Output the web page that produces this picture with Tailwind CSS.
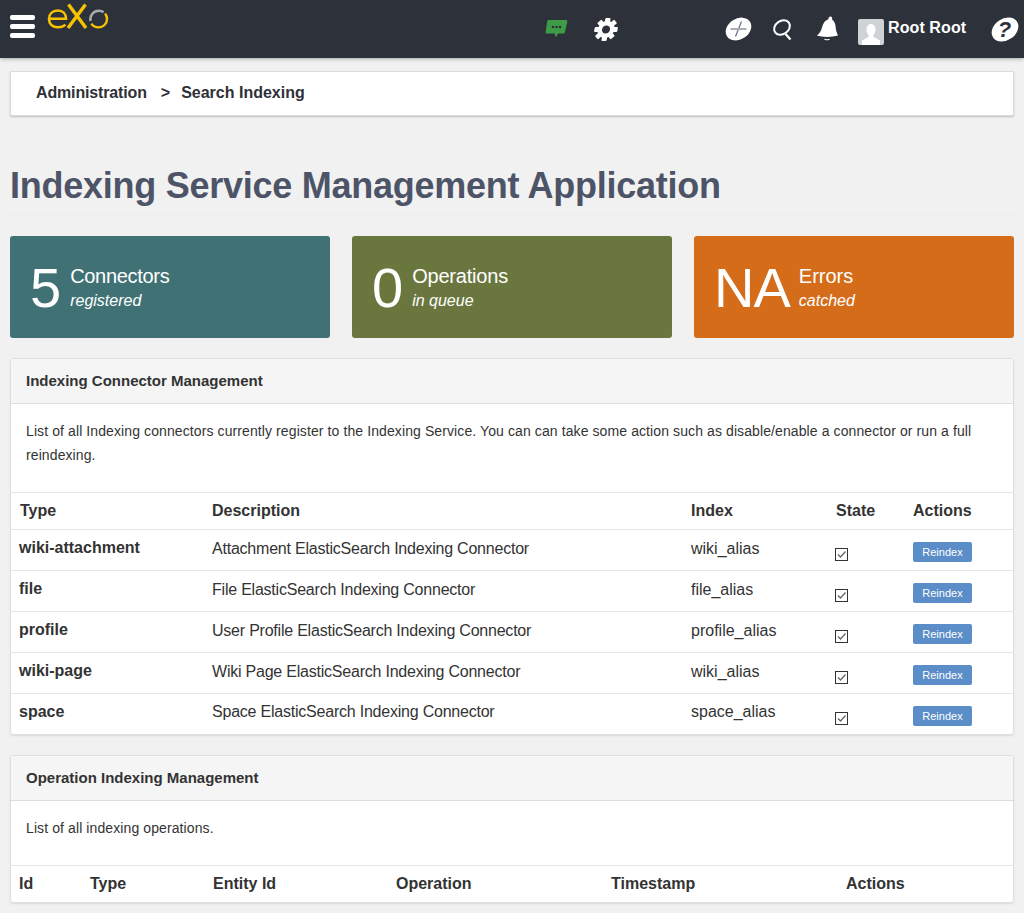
<!DOCTYPE html>
<html lang="en">
<head>
    <meta charset="UTF-8">
    <title>Search Indexing</title>
    <script src="https://cdn.jsdelivr.net/npm/@tailwindcss/browser@4"></script>
</head>
<body class="bg-[#f1f1f1] font-['Liberation_Sans',Arial,sans-serif] text-[#333] h-[913px] overflow-hidden">
    <!-- Top bar -->
    <header class="relative h-[58px] bg-[#2d323a] shadow-[0_1px_4px_rgba(0,0,0,0.3)]">
        <div class="absolute left-[10px] top-[15px] w-[25px] flex flex-col gap-[4px]">
            <span class="h-[5px] rounded-[2px] bg-white"></span>
            <span class="h-[5px] rounded-[2px] bg-white"></span>
            <span class="h-[5px] rounded-[2px] bg-white"></span>
        </div>
        <svg class="absolute left-[46px] top-[3px]" width="64" height="28" viewBox="0 0 64 28" fill="none">
            <path d="M3.5 15.8H20C20 10.5 16.5 7.5 12 7.5C6.5 7.5 3 11 3 16C3 21 6.5 24.3 12 24.3C15 24.3 17.5 23.5 19.5 21.8" stroke="#f7c300" stroke-width="2.6"/>
            <path d="M22.5 1.5L40 25M39.5 1.5L22 25" stroke="#f7c300" stroke-width="3.4"/>
            <path d="M59 10.5C60.4 12 61 14 61 16C61 20.8 57.2 24.4 52.6 24.4C49.5 24.4 47 23 45.4 20.6" stroke="#f7c300" stroke-width="2.4"/>
            <path d="M44.4 18C43.6 12.4 47.6 7.8 52.8 7.8C54.6 7.8 56.4 8.3 57.6 9.2" stroke="#a9acaf" stroke-width="2.4"/>
        </svg>
        <!-- chat -->
        <svg class="absolute left-[545px] top-[19px]" width="23" height="20" viewBox="0 0 23 20">
            <path d="M4 1H21C22 1 22.6 1.8 22.3 2.8L20 13C19.8 14 19 14.6 18 14.6H13L11 18.6L9.6 14.6H2C1 14.6 .4 13.8 .7 12.8L2.2 2.6C2.4 1.6 3 1 4 1Z" fill="#3f9c46"/>
            <circle cx="8" cy="8" r="1.3" fill="#2d323a"/><circle cx="11.5" cy="8" r="1.3" fill="#2d323a"/><circle cx="15" cy="8" r="1.3" fill="#2d323a"/>
        </svg>
        <!-- gear -->
        <svg class="absolute left-[593px] top-[17px]" width="26" height="25" viewBox="0 0 26 25">
            <g transform="translate(13 12.5) skewX(-10)">
                <g fill="#fff">
                    <circle r="8.4"/>
                    <rect x="-2.6" y="-11.6" width="5.2" height="23.2" rx="1"/>
                    <rect x="-2.6" y="-11.6" width="5.2" height="23.2" rx="1" transform="rotate(45)"/>
                    <rect x="-2.6" y="-11.6" width="5.2" height="23.2" rx="1" transform="rotate(90)"/>
                    <rect x="-2.6" y="-11.6" width="5.2" height="23.2" rx="1" transform="rotate(135)"/>
                </g>
                <circle r="4" fill="#2d323a"/>
            </g>
        </svg>
        <!-- add -->
        <svg class="absolute left-[725px] top-[16px]" width="27" height="26" viewBox="0 0 27 26">
            <ellipse cx="13.5" cy="13" rx="13.6" ry="10.4" fill="#fff" transform="rotate(-32 13.5 13)"/>
            <path d="M16.5 5.5L10.5 20.5" stroke="#5f6f88" stroke-width="1.2"/><path d="M5.5 13H21.5" stroke="#a9adb3" stroke-width="2"/>
        </svg>
        <!-- search -->
        <svg class="absolute left-[772px] top-[18px]" width="22" height="23" viewBox="0 0 22 23" fill="none" stroke="#fff" stroke-width="2">
            <ellipse cx="10" cy="9.5" rx="8.4" ry="6.6" transform="rotate(-35 10 9.5)"/>
            <path d="M13.5 16L18.5 21.5" stroke-width="2.2"/>
        </svg>
        <!-- bell -->
        <svg class="absolute left-[815px] top-[16px]" width="24" height="26" viewBox="0 0 24 26" fill="#fff">
            <path d="M15.5 .5C17 .5 17.5 2 17 3.4C19.2 4.8 20.4 7.5 20.6 10.5C20.8 14 21.6 16.5 23 19.6C17 21.5 7 21.5 1.8 19.6C4.6 17.5 6 15 7 11.5C8 7.5 9.8 4.4 13.4 3.2C13.4 1.8 14 .5 15.5 .5Z"/>
            <path d="M9 22.8C11 23.3 13 23.3 15 22.8C14.5 24.8 9.5 24.8 9 22.8Z"/>
        </svg>
        <!-- avatar -->
        <div class="absolute left-[858px] top-[19px] w-[26px] h-[26px] rounded-[2px] bg-[#d0d3d6] overflow-hidden">
            <svg width="26" height="26" viewBox="0 0 26 26" fill="#fff">
                <path d="M13 5C16 5 17.5 7.5 17.5 10.5C17.5 13 16.5 15 15.5 16V18L22 21.5V26H4V21.5L10.5 18V16C9.5 15 8.5 13 8.5 10.5C8.5 7.5 10 5 13 5Z"/>
            </svg>
        </div>
        <span class="absolute left-[888px] top-[18px] text-white text-[16px] leading-[20px] font-bold tracking-[0.1px]">Root Root</span>
        <!-- help -->
        <svg class="absolute left-[991px] top-[16px]" width="28" height="27" viewBox="0 0 28 27">
            <ellipse cx="14" cy="13.5" rx="14.4" ry="10.8" fill="#fff" transform="rotate(-35 14 13.5)"/>
            <text x="13.5" y="21" text-anchor="middle" font-family="Liberation Sans" font-size="22" font-weight="bold" font-style="italic" fill="#2d323a">?</text>
        </svg>
    </header>

    <main class="px-[10px]">
        <!-- Breadcrumb -->
        <div class="mt-[13px] h-[45px] pb-[2px] bg-white border border-[#dcdcdc] rounded-[2px] shadow-[0_1px_2px_rgba(0,0,0,0.2)] flex items-center pl-[25px] text-[16px] font-bold text-[#2f3038]">
            <span class="tracking-[-0.15px]">Administration</span>
            <span class="ml-[14px]">&gt;</span>
            <span class="ml-[11px]">Search Indexing</span>
        </div>

        <h1 class="mt-[47px] h-[52px] border-b border-[#ececec] text-[36px] leading-[46px] font-bold text-[#4d5468] tracking-[-0.26px]">Indexing Service Management Application</h1>

        <!-- Stat cards -->
        <div class="mt-[21px] grid grid-cols-3 gap-[22px] text-white">
            <div class="h-[102px] pt-[3px] rounded-[3px] bg-[#407275] flex items-center pl-[20px]">
                <span class="pb-[2px] text-[56px] leading-[60px]">5</span>
                <div class="ml-[9px]">
                    <div class="text-[20px] leading-[24px] tracking-[-0.3px]">Connectors</div>
                    <div class="text-[16px] leading-[26px] italic">registered</div>
                </div>
            </div>
            <div class="h-[102px] pt-[3px] rounded-[3px] bg-[#69773e] flex items-center pl-[20px]">
                <span class="pb-[2px] text-[56px] leading-[60px]">0</span>
                <div class="ml-[9px]">
                    <div class="text-[20px] leading-[24px] tracking-[-0.2px]">Operations</div>
                    <div class="text-[16px] leading-[26px] italic">in queue</div>
                </div>
            </div>
            <div class="h-[102px] pt-[3px] rounded-[3px] bg-[#d46c1a] flex items-center pl-[20px]">
                <span class="pb-[2px] text-[56px] leading-[60px] tracking-[-1px]">NA</span>
                <div class="ml-[9px]">
                    <div class="text-[20px] leading-[24px]">Errors</div>
                    <div class="text-[16px] leading-[26px] italic">catched</div>
                </div>
            </div>
        </div>

        <!-- Connector panel -->
        <section class="mt-[20px] bg-white border border-[#dfdfdf] rounded-[3px] shadow-[0_1px_2px_rgba(0,0,0,0.1)]">
            <h2 class="h-[45px] bg-[#f5f5f5] border-b border-[#dddddd] flex items-center pl-[15px] text-[15px] font-bold text-[#333]">Indexing Connector Management</h2>
            <p class="h-[88px] px-[15px] pt-[15px] text-[14px] leading-[24px] text-[#333] tracking-[0.1px]">List of all Indexing connectors currently register to the Indexing Service. You can can take some action such as disable/enable a connector or run a full reindexing.</p>
            <table class="w-full table-fixed text-[16px] text-[#333]">
                <colgroup>
                    <col class="w-[201px]"><col class="w-[479px]"><col class="w-[145px]"><col class="w-[77px]"><col>
                </colgroup>
                <thead>
                    <tr class="h-[37px] border-y border-[#e2e6ea] font-bold text-left">
                        <th class="pl-[9px]">Type</th><th>Description</th><th>Index</th><th>State</th><th>Actions</th>
                    </tr>
                </thead>
                <tbody>
                    <tr class="h-[41px] border-b border-[#e2e6ea]">
                        <td class="pl-[8px] pb-[4px] font-bold">wiki-attachment</td><td class="pb-[3px] tracking-[-0.22px]">Attachment ElasticSearch Indexing Connector</td><td class="pb-[3px]">wiki_alias</td>
                        <td><span class="mt-[9px] -ml-[1px] block w-[13px] h-[13px] border border-[#333] bg-white"><svg width="11" height="11" viewBox="0 0 11 11" fill="none" stroke="#666" stroke-width="1.3"><path d="M2 5.5L4.5 8L9.5 2.5"/></svg></span></td>
                        <td><button class="block mt-[4px] w-[59px] h-[20px] rounded-[2px] bg-[#5b8dc8] text-white text-[11px]">Reindex</button></td>
                    </tr>
                    <tr class="h-[41px] border-b border-[#e2e6ea]">
                        <td class="pl-[8px] pb-[4px] font-bold">file</td><td class="pb-[3px] tracking-[-0.22px]">File ElasticSearch Indexing Connector</td><td class="pb-[3px]">file_alias</td>
                        <td><span class="mt-[9px] -ml-[1px] block w-[13px] h-[13px] border border-[#333] bg-white"><svg width="11" height="11" viewBox="0 0 11 11" fill="none" stroke="#666" stroke-width="1.3"><path d="M2 5.5L4.5 8L9.5 2.5"/></svg></span></td>
                        <td><button class="block mt-[4px] w-[59px] h-[20px] rounded-[2px] bg-[#5b8dc8] text-white text-[11px]">Reindex</button></td>
                    </tr>
                    <tr class="h-[41px] border-b border-[#e2e6ea]">
                        <td class="pl-[8px] pb-[4px] font-bold">profile</td><td class="pb-[3px] tracking-[-0.22px]">User Profile ElasticSearch Indexing Connector</td><td class="pb-[3px]">profile_alias</td>
                        <td><span class="mt-[9px] -ml-[1px] block w-[13px] h-[13px] border border-[#333] bg-white"><svg width="11" height="11" viewBox="0 0 11 11" fill="none" stroke="#666" stroke-width="1.3"><path d="M2 5.5L4.5 8L9.5 2.5"/></svg></span></td>
                        <td><button class="block mt-[4px] w-[59px] h-[20px] rounded-[2px] bg-[#5b8dc8] text-white text-[11px]">Reindex</button></td>
                    </tr>
                    <tr class="h-[41px] border-b border-[#e2e6ea]">
                        <td class="pl-[8px] pb-[4px] font-bold">wiki-page</td><td class="pb-[3px] tracking-[-0.22px]">Wiki Page ElasticSearch Indexing Connector</td><td class="pb-[3px]">wiki_alias</td>
                        <td><span class="mt-[9px] -ml-[1px] block w-[13px] h-[13px] border border-[#333] bg-white"><svg width="11" height="11" viewBox="0 0 11 11" fill="none" stroke="#666" stroke-width="1.3"><path d="M2 5.5L4.5 8L9.5 2.5"/></svg></span></td>
                        <td><button class="block mt-[4px] w-[59px] h-[20px] rounded-[2px] bg-[#5b8dc8] text-white text-[11px]">Reindex</button></td>
                    </tr>
                    <tr class="h-[40px]">
                        <td class="pl-[8px] pb-[4px] font-bold">space</td><td class="pb-[3px] tracking-[-0.22px]">Space ElasticSearch Indexing Connector</td><td class="pb-[3px]">space_alias</td>
                        <td><span class="mt-[9px] -ml-[1px] block w-[13px] h-[13px] border border-[#333] bg-white"><svg width="11" height="11" viewBox="0 0 11 11" fill="none" stroke="#666" stroke-width="1.3"><path d="M2 5.5L4.5 8L9.5 2.5"/></svg></span></td>
                        <td><button class="block mt-[4px] w-[59px] h-[20px] rounded-[2px] bg-[#5b8dc8] text-white text-[11px]">Reindex</button></td>
                    </tr>
                </tbody>
            </table>
        </section>

        <!-- Operation panel -->
        <section class="mt-[20px] bg-white border border-[#dfdfdf] rounded-[3px] shadow-[0_1px_2px_rgba(0,0,0,0.1)]">
            <h2 class="h-[45px] pt-[2px] bg-[#f5f5f5] border-b border-[#dddddd] flex items-center pl-[15px] text-[15px] font-bold text-[#333]">Operation Indexing Management</h2>
            <p class="h-[64px] px-[15px] pt-[15px] text-[14px] leading-[24px] text-[#333] tracking-[0.1px]">List of all indexing operations.</p>
            <table class="w-full table-fixed text-[16px] text-[#333]">
                <colgroup>
                    <col class="w-[79px]"><col class="w-[123px]"><col class="w-[183px]"><col class="w-[215px]"><col class="w-[235px]"><col>
                </colgroup>
                <thead>
                    <tr class="h-[37px] border-t border-[#e2e6ea] font-bold text-left">
                        <th class="pl-[8px]">Id</th><th>Type</th><th>Entity Id</th><th>Operation</th><th>Timestamp</th><th>Actions</th>
                    </tr>
                </thead>
            </table>
        </section>
    </main>
</body>
</html>
